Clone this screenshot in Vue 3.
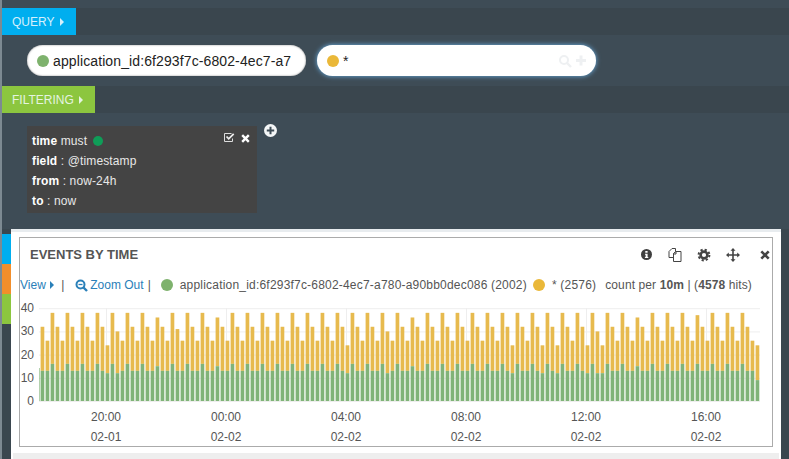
<script setup>
// bucket totals, mostly a repeating 32/26/38 pattern with a few odd ones
const overrides = {
  13: [24, 12], 15: [30, 12], 23: [36, 15], 27: [31, 13], 35: [36, 15], 61: [24, 12],
  69: [30, 12], 74: [36, 15], 94: [24, 12], 100: [24, 12], 103: [24, 12], 109: [24, 12],
  111: [30, 12], 112: [24, 12], 119: [36, 15], 131: [37, 16], 143: [24, 9],
};
const base = [[32, 13], [26, 13], [38, 16]];
const unit = 2.32;
const zeroY = 104;
const bars = [];
for (let i = 0; i < 144; i++) {
  const [total, green] = overrides[i] || base[i % 3];
  bars.push({
    x: 20.6 + i * 5,
    greenH: green * unit,
    yellowH: (total - green) * unit,
    greenY: zeroY - green * unit,
    yellowY: zeroY - total * unit,
  });
}
const yTicks = [40, 30, 20, 10, 0];
const xTicks = [
  { x: 86, time: '20:00', date: '02-01' },
  { x: 206, time: '00:00', date: '02-02' },
  { x: 326, time: '04:00', date: '02-02' },
  { x: 446, time: '08:00', date: '02-02' },
  { x: 566, time: '12:00', date: '02-02' },
  { x: 686, time: '16:00', date: '02-02' },
];
</script>

<template>
  <div class="page">
    <div class="band"><div class="tab tab-query">QUERY <span class="caret"></span></div></div>
    <div class="queries">
      <div class="pill">
        <span class="dot dot-green"></span>
        <span class="pill-text">application_id:6f293f7c-6802-4ec7-a7</span>
      </div>
      <div class="pill pill-focus">
        <span class="dot dot-yellow"></span>
        <span class="pill-text">*</span>
        <svg class="pill-icons" width="30" height="14" viewBox="0 0 30 14">
          <circle cx="6" cy="6" r="4" fill="none" stroke="#eef0f2" stroke-width="2" />
          <path d="M9 9l4 4" stroke="#eef0f2" stroke-width="2.4" />
          <path d="M18 6.500h10M23 1.500v10" stroke="#eef0f2" stroke-width="3" />
        </svg>
      </div>
    </div>
    <div class="band"><div class="tab tab-filter">FILTERING <span class="caret"></span></div></div>
    <div class="filters">
      <div class="filter-card">
        <div class="filter-tools">
          <svg width="11" height="10" viewBox="0 0 11 10">
            <path d="M8.500 5.500v3h-8v-8h7" fill="none" stroke="#ddd" stroke-width="1" />
            <path d="M2.500 3.500l2.200 2.300 5-5" fill="none" stroke="#eee" stroke-width="1.800" />
          </svg>
          <svg width="9" height="9" viewBox="0 0 9 9">
            <path d="M1.200 1.200l6.600 6.600M7.800 1.200l-6.600 6.600" stroke="#fff" stroke-width="2.400" />
          </svg>
        </div>
        <div><b>time</b> must <span class="dot-small"></span></div>
        <div><b>field</b> : @timestamp</div>
        <div><b>from</b> : now-24h</div>
        <div><b>to</b> : now</div>
      </div>
      <svg class="add-filter" width="13" height="13" viewBox="0 0 13 13">
        <circle cx="6.500" cy="6.500" r="6.500" fill="#f4f6f7" />
        <path d="M2.800 6.500h7.400M6.500 2.800v7.400" stroke="#3e4c56" stroke-width="2" />
      </svg>
    </div>
    <div class="lower">
      <div class="side-tabs">
        <div class="side side-blue"></div>
        <div class="side side-orange"></div>
        <div class="side side-green"></div>
      </div>
      <div class="panel">
        <div class="panel-box">
          <div class="panel-head">
            <h3>EVENTS BY TIME</h3>
            <div class="panel-icons">
              <svg width="13" height="13" viewBox="0 0 13 13">
                <circle cx="6.500" cy="6.500" r="5.500" fill="#3f3f3f" />
                <path d="M5.300 3h2.300v1.700h-2.300zM5 5.800h2.600v3.300h.7v1h-3.400v-1h.7v-2.300h-.6z" fill="#fff" />
              </svg>
              <svg width="14" height="14" viewBox="0 0 14 14">
                <path d="M1 3.500l3-3h3.500v3l-2 2v4h-4.500z" fill="#fff" stroke="#444" stroke-width="1" />
                <path d="M5.500 5.500l2.500-2h5v10h-7.500z" fill="#fff" stroke="#444" stroke-width="1" />
                <path d="M8 3.500v2.500h-2.500" fill="none" stroke="#444" stroke-width="1" />
              </svg>
              <svg width="14" height="14" viewBox="0 0 14 14">
                <circle cx="7" cy="7" r="3.400" fill="none" stroke="#444" stroke-width="2.600" />
                <circle cx="7" cy="7" r="5.400" fill="none" stroke="#444" stroke-width="2" stroke-dasharray="2.200 2.040" />
              </svg>
              <svg width="14" height="14" viewBox="0 0 14 14">
                <path d="M7 2v10M2 7h10" stroke="#444" stroke-width="1.600" />
                <path d="M7 0l2.500 2.800h-5zM7 14l2.500-2.800h-5zM0 7l2.800-2.500v5zM14 7l-2.800-2.500v5z" fill="#444" />
              </svg>
              <svg class="icon-close" width="10" height="10" viewBox="0 0 10 10">
                <path d="M1.300 1.300l7.400 7.400M8.700 1.300l-7.400 7.400" stroke="#444" stroke-width="2.600" />
              </svg>
            </div>
          </div>
          <div class="legend">
            <a class="view">View <span class="caret caret-blue"></span></a>
            <span class="sep">|</span>
            <a class="zoom">
              <svg width="13" height="13" viewBox="0 0 13 13">
                <circle cx="5.500" cy="5.500" r="4" fill="none" stroke="#2a80b9" stroke-width="2" />
                <path d="M3.500 5.500h4" stroke="#2a80b9" stroke-width="1.300" />
                <path d="M8.500 8.500l3.500 3.500" stroke="#2a80b9" stroke-width="2.400" />
              </svg>
              Zoom Out
            </a>
            <span class="sep">|</span>
            <span class="dot dot-green legend-dot"></span>
            <span class="legend-label">application_id:6f293f7c-6802-4ec7-a780-a90bb0dec086 (2002)</span>
            <span class="dot dot-yellow legend-dot"></span>
            <span class="legend-label">* (2576)</span>
            <span class="count">count per <b>10m</b> | (<b>4578</b> hits)</span>
          </div>
          <svg class="chart" width="752" height="148" viewBox="0 0 752 148">
            <g v-for="t in yTicks" :key="t">
              <line x1="19" x2="740" :y1="zeroY - t * unit + 0.500" :y2="zeroY - t * unit + 0.500" stroke="#eeeeee" />
              <text x="14" :y="zeroY - t * unit + 4" text-anchor="end" class="axis">{{ t }}</text>
            </g>
            <line v-for="t in xTicks" :key="t.x" :x1="t.x + 0.500" :x2="t.x + 0.500" y1="11" :y2="zeroY" stroke="#eeeeee" />
            <rect x="19.400" :y="zeroY - 33" width="0.600" height="33" fill="#80b378" />
            <g v-for="(b, i) in bars" :key="i">
              <rect :x="b.x" :y="b.yellowY" width="3.700" :height="b.yellowH" fill="#e7ba4e" />
              <rect :x="b.x" :y="b.greenY" width="3.700" :height="b.greenH" fill="#80b378" />
            </g>
            <g v-for="t in xTicks" :key="t.time">
              <text :x="t.x" y="124" text-anchor="middle" class="axis">{{ t.time }}</text>
              <text :x="t.x" y="144" text-anchor="middle" class="axis">{{ t.date }}</text>
            </g>
          </svg>
        </div>
        <div class="panel-foot"></div>
      </div>
    </div>
  </div>
</template>

<style>
html, body {
  margin: 0;
  background: #3a464e;
}
</style>

<style scoped>
.page {
  width: 789px;
  height: 459px;
  box-sizing: border-box;
  padding-top: 8px;
  border-left: 2px solid #7d8a92;
  background: #3e4c56;
  overflow: hidden;
  font-family: "Liberation Sans", Arial, sans-serif;
}
.band {
  height: 27px;
  background: #3a464e;
}
.tab {
  display: inline-block;
  height: 27px;
  line-height: 28px;
  padding: 0 12px 0 10px;
  font-size: 12px;
  color: #e4f4e0;
}
.tab-query {
  background: #00aeef;
  color: #d5f0fc;
}
.tab-filter {
  background: #8cc63f;
}
.caret {
  display: inline-block;
  width: 0;
  height: 0;
  margin-left: 2px;
  border-style: solid;
  border-width: 4px 0 4px 4px;
  border-color: transparent transparent transparent currentColor;
}
.queries {
  height: 51px;
  display: flex;
  gap: 11px;
  padding: 10px 0 0 25px;
  box-sizing: border-box;
}
.pill {
  width: 279px;
  height: 31px;
  box-sizing: border-box;
  display: flex;
  align-items: center;
  padding-left: 10px;
  border-radius: 16px;
  background: #fff;
  box-shadow: inset 0 0 2px #888;
  font-size: 14px;
  letter-spacing: 0.11px;
  color: #222;
  overflow: hidden;
  white-space: nowrap;
}
.pill-focus {
  box-shadow: 0 0 5px #6db3e8;
}
.dot {
  flex: none;
  width: 12px;
  height: 12px;
  border-radius: 50%;
  margin-right: 4px;
}
.dot-green {
  background: #7eb26d;
}
.dot-yellow {
  background: #eab839;
}
.pill-icons {
  margin-left: auto;
  margin-right: 8px;
}
.filters {
  height: 116px;
  display: flex;
  align-items: flex-start;
  padding: 13px 0 0 25px;
  box-sizing: border-box;
}
.filter-card {
  position: relative;
  width: 230px;
  height: 87px;
  box-sizing: border-box;
  padding: 5px 5px;
  background: #444444;
  color: #e8e8e8;
  font-size: 12px;
  letter-spacing: 0.13px;
  line-height: 20px;
}
.filter-card b {
  color: #fff;
}
.filter-tools {
  position: absolute;
  top: 7px;
  right: 7px;
  display: flex;
  align-items: center;
  gap: 6px;
}
.dot-small {
  display: inline-block;
  width: 10px;
  height: 10px;
  border-radius: 50%;
  background: #0f9d58;
  vertical-align: -1px;
  margin-left: 2px;
}
.add-filter {
  margin: -2px 0 0 7px;
}
.lower {
  display: flex;
  align-items: flex-start;
  height: 230px;
  background: #3a474f;
}
.side-tabs {
  width: 9px;
  padding-top: 5px;
  flex: none;
}
.side {
  height: 30px;
}
.side-blue {
  background: #00aeef;
}
.side-orange {
  background: #f28e2b;
}
.side-green {
  background: #8cc63f;
}
.panel {
  width: 770px;
  height: 230px;
  box-sizing: border-box;
  padding: 5px 8px 0;
  background: #fff;
  border-top: 3px solid #e8ecef;
  margin-right: 8px;
}
.panel-box {
  width: 754px;
  height: 210px;
  box-sizing: border-box;
  border: 1px solid #ababab;
  color: #555;
}
.panel-head {
  display: flex;
  align-items: center;
  justify-content: space-between;
  height: 33px;
  padding-left: 10px;
}
.panel-head h3 {
  margin: 0;
  font-size: 13px;
  font-weight: bold;
  color: #555;
}
.panel-icons {
  display: flex;
  align-items: center;
  gap: 15px;
  margin-right: 2px;
}
.icon-close {
  margin-left: 5px;
}
.legend {
  display: flex;
  align-items: center;
  height: 26px;
  padding-top: 2px;
  box-sizing: border-box;
  font-size: 12px;
  white-space: nowrap;
}
.view,
.zoom {
  color: #2a80b9;
}
.zoom {
  display: flex;
  align-items: center;
  gap: 2px;
}
.caret-blue {
  margin-left: 1px;
}
.sep {
  margin: 0 11px 0 7px;
}
.zoom + .sep {
  margin: 0 10px 0 4px;
}
.legend-dot {
  margin-right: 7px;
}
.legend-label {
  margin-right: 6px;
  letter-spacing: 0.2px;
}
.count {
  margin-left: 3px;
  letter-spacing: 0.1px;
}
.chart {
  display: block;
}
.axis {
  font-size: 12px;
  fill: #555;
  font-family: "Liberation Sans", Arial, sans-serif;
}
.panel-foot {
  height: 6px;
  margin: 6px -6px 0;
  background: #eeeeee;
}
</style>
